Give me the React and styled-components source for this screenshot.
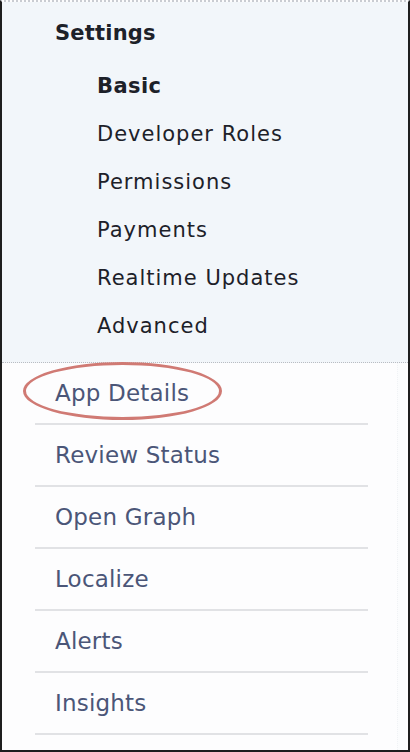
import React from "react";
import styled, { createGlobalStyle } from "styled-components";

const GlobalStyle = createGlobalStyle`
  html, body {
    margin: 0;
    padding: 0;
    background: #ffffff;
  }
  body {
    font-family: "DejaVu Sans", "Liberation Sans", sans-serif;
  }
`;

const settingsLinks = [
  { label: "Basic", active: true },
  { label: "Developer Roles" },
  { label: "Permissions" },
  { label: "Payments" },
  { label: "Realtime Updates" },
  { label: "Advanced" },
];

const navLinks = [
  "App Details",
  "Review Status",
  "Open Graph",
  "Localize",
  "Alerts",
  "Insights",
];

const App = () => {
  return (
    <>
      <GlobalStyle />
      <Frame>
        <SettingsPanel>
          <SettingsTitle>Settings</SettingsTitle>
          <SubList>
            {settingsLinks.map((item) => (
              <SubItem key={item.label} $active={item.active}>
                {item.label}
              </SubItem>
            ))}
          </SubList>
        </SettingsPanel>
        <NavList>
          {navLinks.map((label, index) => (
            <NavItem key={label}>
              {label}
              {index === 0 && <Circled />}
            </NavItem>
          ))}
        </NavList>
        <ScrollTrack />
      </Frame>
    </>
  );
};

const Frame = styled.div`
  position: relative;
  width: 410px;
  height: 752px;
  box-sizing: border-box;
  border: 2px solid #1e1e1e;
  border-top: 2px dotted #c9ccd2;
  background: #fdfdfe;
  overflow: hidden;
`;

const SettingsPanel = styled.div`
  background: #f2f6fa;
  border-bottom: 1px dotted #b9bcc2;
  padding: 17px 0 0 53px;
  height: 361px;
  box-sizing: border-box;
`;

const SettingsTitle = styled.div`
  font-size: 21px;
  font-weight: bold;
  color: #1d2129;
  letter-spacing: 0.2px;
  line-height: 28px;
`;

const SubList = styled.div`
  display: flex;
  flex-direction: column;
  padding: 15px 0 0 42px;
`;

const SubItem = styled.div`
  font-size: 21px;
  line-height: 48px;
  height: 48px;
  color: #1d2129;
  letter-spacing: ${(p) => (p.$active ? "0.4px" : "1px")};
  font-weight: ${(p) => (p.$active ? "bold" : "normal")};
`;

const NavList = styled.div`
  display: flex;
  flex-direction: column;
  margin: 0 40px 0 33px;
`;

const NavItem = styled.div`
  position: relative;
  height: 60px;
  line-height: 60px;
  padding-left: 20px;
  font-size: 23px;
  color: #4b5678;
  border-bottom: 2px solid #e1e2e5;
  letter-spacing: 0.2px;
`;

const Circled = styled.span`
  position: absolute;
  left: -12px;
  top: -1px;
  width: 199px;
  height: 58px;
  border: 3px solid #d07a74;
  border-radius: 50%;
  box-sizing: border-box;
`;

const ScrollTrack = styled.div`
  position: absolute;
  right: 2px;
  top: 361px;
  bottom: 0;
  width: 8px;
  border-left: 1px dotted #f0f2f5;
  background: #fbfcfd;
`;

export default App;
